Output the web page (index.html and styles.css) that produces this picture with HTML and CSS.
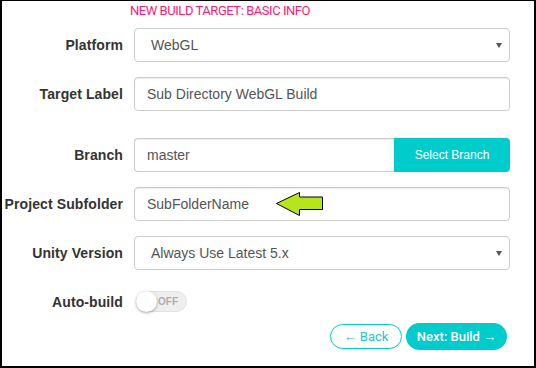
FILE: index.html
```html
<!DOCTYPE html>
<html>
<head>
<meta charset="utf-8">
<link rel="stylesheet" href="styles.css">
</head>
<body>
<div class="frame">
  <div class="title">NEW BUILD TARGET: BASIC INFO</div>
  <div class="form">
    <div class="row">
      <div class="label">Platform</div>
      <div class="field select"><span>WebGL</span><span class="caret"></span></div>
    </div>
    <div class="row">
      <div class="label">Target Label</div>
      <div class="field input">Sub Directory WebGL Build</div>
    </div>
    <div class="row row-branch">
      <div class="label">Branch</div>
      <div class="group">
        <div class="field input group-input">master</div>
        <div class="group-btn">Select Branch</div>
      </div>
    </div>
    <div class="row">
      <div class="label">Project Subfolder</div>
      <div class="field input annotated">SubFolderName
        <svg class="pointer" width="48" height="24" viewBox="0 0 48 24"><polygon points="0.5,11.5 23.5,0.5 23.5,5 46.5,5 46.5,17.5 23.5,17.5 23.5,23.5" fill="#b5e61d" stroke="#000" stroke-width="1"/></svg>
      </div>
    </div>
    <div class="row">
      <div class="label">Unity Version</div>
      <div class="field select"><span>Always Use Latest 5.x</span><span class="caret"></span></div>
    </div>
    <div class="row row-toggle">
      <div class="label">Auto-build</div>
      <div class="toggle-cell">
        <div class="toggle"><span class="knob"></span><span class="off">OFF</span></div>
      </div>
    </div>
    <div class="actions">
      <button class="btn btn-back">&larr; Back</button>
      <button class="btn btn-next">Next: Build &rarr;</button>
    </div>
  </div>
</div>
</body>
</html>
```

FILE: styles.css
```css
html, body {
  margin: 0;
  padding: 0;
  background: #fff;
}
.frame {
  width: 536px;
  height: 368px;
  box-sizing: border-box;
  border: 2px solid #000;
  border-top-width: 1px;
  background: #fff;
  font-family: "Liberation Sans", Arial, sans-serif;
  overflow: hidden;
}
.title {
  margin-top: 2px;
  padding-left: 128px;
  font-family: Roboto, "Liberation Sans", sans-serif;
  font-size: 13px;
  letter-spacing: -0.45px;
  line-height: 15px;
  color: #ff1a75;
}
.form {
  padding-right: 24px;
  margin-top: 10px;
}
.row {
  display: grid;
  grid-template-columns: 121px 376px;
  column-gap: 11px;
  align-items: center;
  height: 34px;
  margin-bottom: 15px;
}
.row-branch { margin-top: 27px; }
.label {
  text-align: right;
  font-weight: bold;
  font-size: 14px;
  color: #333;
  letter-spacing: 0.1px;
}
.field {
  height: 34px;
  box-sizing: border-box;
  border: 1px solid #ccc;
  border-radius: 4px;
  box-shadow: inset 0 1px 1px rgba(0,0,0,0.075);
  font-size: 14px;
  color: #555;
  display: flex;
  align-items: center;
  padding: 0 12px;
  background: #fff;
}
.select {
  padding-left: 16px;
  padding-right: 7px;
  box-shadow: none;
}
.caret {
  margin-left: auto;
  width: 0;
  height: 0;
  border-left: 3px solid transparent;
  border-right: 3px solid transparent;
  border-top: 5px solid #555;
}
.group {
  display: flex;
  height: 34px;
}
.group-input {
  flex: 1;
  border-radius: 4px 0 0 4px;
  border-right: none;
}
.group-btn {
  width: 116px;
  background: #00cccc;
  color: #fff;
  font-size: 12px;
  border-radius: 0 4px 4px 0;
  display: flex;
  align-items: center;
  justify-content: center;
}
.annotated {
  position: relative;
}
.pointer {
  position: absolute;
  left: 141px;
  top: 4px;
}
.row-toggle {
  height: 21px;
  margin-top: 21px;
  margin-bottom: 10px;
}
.toggle-cell {
  display: flex;
  padding-left: 2px;
}
.toggle {
  width: 51px;
  height: 21px;
  box-sizing: border-box;
  border: 1px solid #e2e2e2;
  border-radius: 11px;
  background: #efefef;
  display: flex;
  align-items: center;
}
.knob {
  width: 21px;
  height: 21px;
  margin-left: -1px;
  border-radius: 50%;
  background: #fff;
  box-shadow: 0 1px 3px rgba(0,0,0,0.35);
  flex: none;
}
.off {
  margin-left: 1px;
  font-size: 10px;
  font-weight: bold;
  color: #aeaeae;
}
.actions {
  display: flex;
  justify-content: flex-end;
  align-items: center;
  gap: 4px;
  padding-right: 3px;
  height: 28px;
}
.btn {
  font-family: Roboto, "Liberation Sans", sans-serif;
  font-size: 13px;
  border-radius: 14px;
  cursor: pointer;
  padding: 0;
}
.btn-back {
  width: 72px;
  height: 25px;
  background: #fff;
  border: 1px solid #00cccc;
  color: #20c8c8;
}
.btn-next {
  width: 101px;
  height: 27px;
  background: #00cccc;
  border: none;
  color: #fff;
  font-weight: 500;
}
```
